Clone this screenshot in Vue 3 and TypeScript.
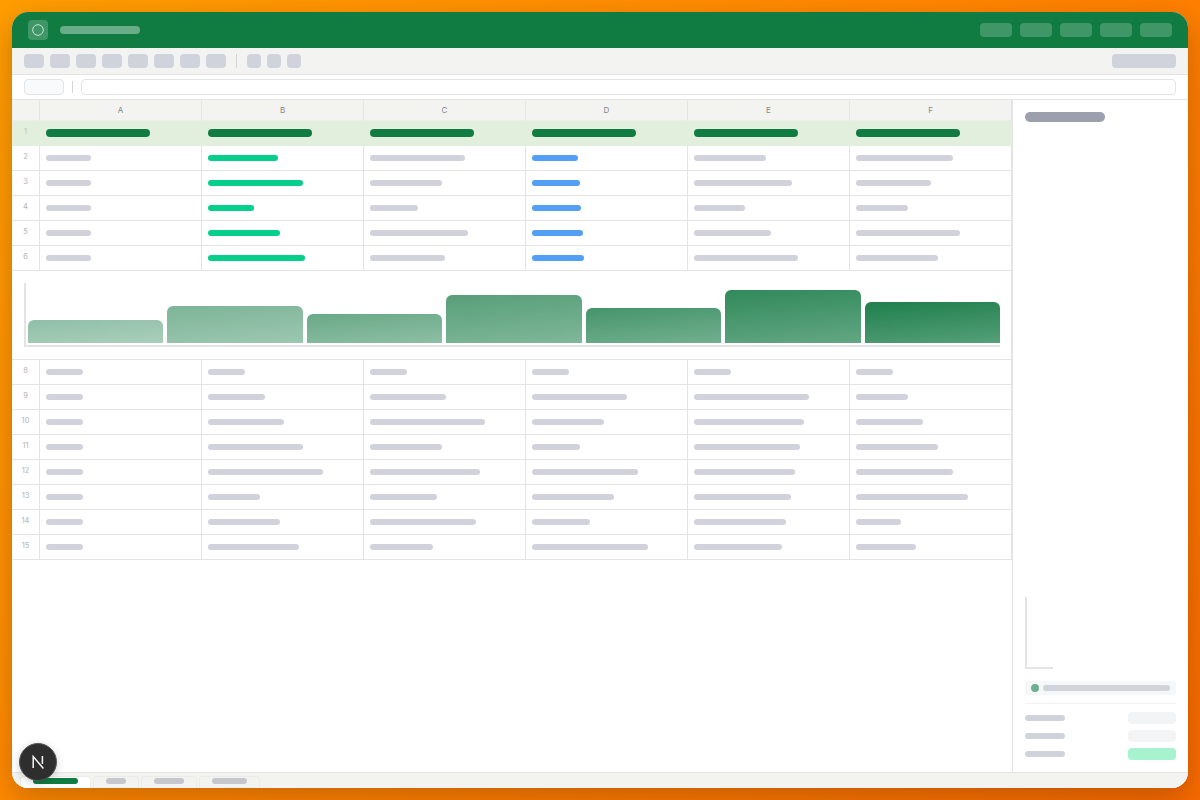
<script setup lang="ts">
// Skeleton spreadsheet: every cell is a placeholder bar, widths come from the rows below.
const columns = ['A', 'B', 'C', 'D', 'E', 'F']

const topRows = [
  { n: 2, w: [45, 70, 95, 46, 72, 97] },
  { n: 3, w: [45, 95, 72, 48, 98, 75] },
  { n: 4, w: [45, 46, 48, 49, 51, 52] },
  { n: 5, w: [45, 72, 98, 51, 77, 104] },
  { n: 6, w: [45, 97, 75, 52, 104, 82] },
]

const bottomRows = [
  { n: 8, w: [37, 37, 37, 37, 37, 37] },
  { n: 9, w: [37, 57, 76, 95, 115, 52] },
  { n: 10, w: [37, 76, 115, 72, 110, 67] },
  { n: 11, w: [37, 95, 72, 48, 106, 82] },
  { n: 12, w: [37, 115, 110, 106, 101, 97] },
  { n: 13, w: [37, 52, 67, 82, 97, 112] },
  { n: 14, w: [37, 72, 106, 58, 92, 45] },
  { n: 15, w: [37, 91, 63, 116, 88, 60] },
]

const chartBars = [
  { h: 23, o: 0.5 },
  { h: 37, o: 0.58 },
  { h: 29, o: 0.67 },
  { h: 48, o: 0.75 },
  { h: 35, o: 0.83 },
  { h: 53, o: 0.92 },
  { h: 41, o: 1 },
]

const tabs = [45, 20, 30, 35]

function barClass(col: number) {
  if (col === 1) return 'bar teal'
  if (col === 3) return 'bar blue'
  return 'bar'
}
</script>

<template>
  <div class="window">
    <header class="titlebar">
      <div class="logo">
        <svg width="12" height="12" viewBox="0 0 12 12">
          <circle cx="6" cy="6" r="5.3" fill="none" stroke="#c6e3d2" stroke-width="1" />
        </svg>
      </div>
      <div class="doc-name"></div>
      <div class="title-actions">
        <span v-for="i in 5" :key="i" class="title-btn"></span>
      </div>
    </header>

    <div class="toolbar">
      <span v-for="i in 8" :key="i" class="tool"></span>
      <span class="tool-sep"></span>
      <span v-for="i in 3" :key="'s' + i" class="tool small"></span>
      <span class="tool wide"></span>
    </div>

    <div class="formula">
      <span class="name-box"></span>
      <span class="formula-sep"></span>
      <span class="formula-input"></span>
    </div>

    <div class="main">
      <div class="sheet">
        <div class="row head">
          <div class="num"></div>
          <div v-for="c in columns" :key="c" class="cell">{{ c }}</div>
        </div>

        <div class="row first">
          <div class="num">1</div>
          <div v-for="c in columns" :key="c" class="cell"><span class="bar strong"></span></div>
        </div>

        <div v-for="r in topRows" :key="r.n" class="row">
          <div class="num">{{ r.n }}</div>
          <div v-for="(w, i) in r.w" :key="i" class="cell">
            <span :class="barClass(i)" :style="{ width: w + 'px' }"></span>
          </div>
        </div>

        <div class="chart-row">
          <div class="chart">
            <div
              v-for="(b, i) in chartBars"
              :key="i"
              class="chart-bar"
              :style="{ height: b.h + 'px', opacity: b.o }"
            ></div>
          </div>
        </div>

        <div v-for="r in bottomRows" :key="r.n" class="row">
          <div class="num">{{ r.n }}</div>
          <div v-for="(w, i) in r.w" :key="i" class="cell">
            <span class="bar" :style="{ width: w + 'px' }"></span>
          </div>
        </div>
      </div>

      <aside class="panel">
        <div class="panel-title"></div>
        <div class="mini-axis"></div>
        <div class="legend">
          <span class="legend-dot"></span>
          <span class="legend-bar"></span>
        </div>
        <div class="panel-rule"></div>
        <div v-for="i in 3" :key="i" class="prop">
          <span class="prop-label"></span>
          <span class="prop-value" :class="{ on: i === 3 }"></span>
        </div>
      </aside>
    </div>

    <footer class="tabs">
      <div v-for="(w, i) in tabs" :key="i" class="tab" :class="{ active: i === 0 }">
        <span class="tab-bar" :style="{ width: w + 'px' }"></span>
      </div>
    </footer>

    <div class="next-badge">
      <svg width="14" height="14" viewBox="0 0 14 14" fill="none">
        <path d="M2.2 13V1.6L12.4 13.4" stroke="#f6f6f6" stroke-width="1.5" />
        <path d="M11.4 1V9" stroke="#f6f6f6" stroke-width="1.5" />
      </svg>
    </div>
  </div>
</template>

<style>
html,
body {
  margin: 0;
  height: 100%;
}
body {
  background: linear-gradient(135deg, #ff9d00 0%, #ff8400 50%, #f96a00 100%);
  overflow: hidden;
}
</style>

<style scoped>
.window {
  position: relative;
  display: flex;
  flex-direction: column;
  width: 1176px;
  height: 776px;
  margin: 12px;
  border-radius: 16px;
  overflow: hidden;
  background: #fff;
  box-shadow: 0 10px 30px rgba(0, 0, 0, 0.22);
  font-family: Inter, "Liberation Sans", sans-serif;
}

.titlebar {
  display: flex;
  align-items: center;
  height: 36px;
  padding: 0 16px;
  box-sizing: border-box;
  background: #107c41;
  flex: none;
}
.logo {
  display: flex;
  align-items: center;
  justify-content: center;
  width: 20px;
  height: 20px;
  border-radius: 4px;
  background: rgba(255, 255, 255, 0.2);
}
.doc-name {
  width: 80px;
  height: 8px;
  margin-left: 12px;
  border-radius: 4px;
  background: rgba(255, 255, 255, 0.38);
}
.title-actions {
  display: flex;
  gap: 8px;
  margin-left: auto;
}
.title-btn {
  width: 32px;
  height: 14px;
  border-radius: 4px;
  background: rgba(255, 255, 255, 0.2);
}

.toolbar {
  display: flex;
  align-items: center;
  gap: 6px;
  height: 27px;
  padding: 0 12px 1px;
  box-sizing: border-box;
  background: #f3f3f1;
  border-bottom: 1px solid #e4e4e4;
  flex: none;
}
.tool {
  width: 20px;
  height: 14px;
  border-radius: 4px;
  background: #d1d3dc;
}
.tool.small {
  width: 14px;
}
.tool.wide {
  width: 64px;
  margin-left: auto;
}
.tool-sep {
  width: 1px;
  height: 14px;
  margin: 0 4px;
  background: #d4d4d4;
}

.formula {
  display: flex;
  align-items: center;
  height: 25px;
  padding: 0 12px;
  box-sizing: border-box;
  border-bottom: 1px solid #e4e4e4;
  flex: none;
}
.name-box {
  width: 40px;
  height: 16px;
  box-sizing: border-box;
  border: 1px solid #e4e4e4;
  border-radius: 4px;
  background: #f8fafc;
}
.formula-sep {
  width: 1px;
  height: 12px;
  margin: 0 8px;
  background: #d4d4d4;
}
.formula-input {
  flex: 1;
  height: 16px;
  box-sizing: border-box;
  border: 1px solid #e4e4e4;
  border-radius: 4px;
}

.main {
  display: flex;
  flex: 1;
  min-height: 0;
}
.sheet {
  width: 1000px;
  flex: none;
}
.row {
  display: grid;
  grid-template-columns: 28px repeat(6, 162px);
  height: 25px;
}
.num,
.cell {
  display: flex;
  align-items: center;
  box-sizing: border-box;
  height: 100%;
  border-right: 1px solid #e4e4e4;
  border-bottom: 1px solid #e4e4e4;
}
.num {
  justify-content: center;
  padding-bottom: 3px;
  font-size: 7.5px;
  color: #b4b4b4;
}
.cell {
  padding-left: 6px;
}
.head {
  height: 21px;
  background: #f3f3f1;
}
.head .num,
.head .cell {
  border-bottom-color: #eaeee6;
}
.head .cell {
  justify-content: center;
  padding: 0 0 1px;
  font-size: 8px;
  font-weight: 400;
  color: #858585;
}
.first {
  background: #e2efdc;
}
.first .num,
.first .cell {
  border-color: #e2efdc;
}
.first .num {
  color: #b5c4b0;
}
.bar {
  display: block;
  height: 6px;
  border-radius: 3px;
  background: #d1d2db;
}
.bar.teal {
  background: #06cf8c;
}
.bar.blue {
  background: #529ff5;
}
.bar.strong {
  width: 104px;
  height: 8px;
  border-radius: 4px;
  background: #107c41;
}

.chart-row {
  box-sizing: border-box;
  height: 89px;
  padding: 12px 11px 12px 12px;
  border-right: 1px solid #e4e4e4;
  border-bottom: 1px solid #e4e4e4;
}
.chart {
  display: flex;
  align-items: flex-end;
  gap: 4px;
  box-sizing: border-box;
  height: 64px;
  padding: 0 0 2px 2px;
  border-left: 2px solid #e4e4e4;
  border-bottom: 2px solid #e4e4e4;
}
.chart-bar {
  flex: 1;
  border-radius: 6px 6px 0 0;
  background: linear-gradient(175deg, #1f7f4c, #559f78);
}

.panel {
  display: flex;
  flex-direction: column;
  flex: 1;
  box-sizing: border-box;
  padding: 12px;
  border-left: 1px solid #e4e4e4;
}
.panel-title {
  width: 80px;
  height: 10px;
  border-radius: 5px;
  background: #9ca0ae;
}
.mini-axis {
  width: 28px;
  height: 72px;
  margin-top: auto;
  margin-bottom: 12px;
  box-sizing: border-box;
  border-left: 2px solid #e4e4e4;
  border-bottom: 2px solid #e4e4e4;
}
.legend {
  display: flex;
  align-items: center;
  gap: 4px;
  height: 14px;
  padding: 0 6px;
  border-radius: 3px;
  background: #f6f7f9;
}
.legend-dot {
  width: 8px;
  height: 8px;
  border-radius: 50%;
  background: #6fae8f;
}
.legend-bar {
  flex: 1;
  height: 6px;
  border-radius: 3px;
  background: #d1d2db;
}
.panel-rule {
  height: 1px;
  margin: 8px 0;
  background: #f1f1f1;
}
.prop {
  display: flex;
  align-items: center;
  justify-content: space-between;
  height: 12px;
}
.prop + .prop {
  margin-top: 6px;
}
.prop-label {
  width: 40px;
  height: 6px;
  border-radius: 3px;
  background: #d1d3dc;
}
.prop-value {
  width: 48px;
  height: 12px;
  border-radius: 4px;
  background: #f3f4f5;
}
.prop-value.on {
  background: #a7f3d0;
}

.tabs {
  display: flex;
  align-items: flex-end;
  gap: 2px;
  height: 16px;
  padding-left: 8px;
  box-sizing: border-box;
  background: #f3f3f1;
  border-top: 1px solid #e4e4e4;
  flex: none;
}
.tab {
  height: 12px;
  box-sizing: border-box;
  padding: 1px 12px 0;
  border: 1px solid #ebebe9;
  border-bottom: 0;
  border-radius: 4px 4px 0 0;
}
.tab.active {
  background: #fff;
}
.tab-bar {
  display: block;
  height: 6px;
  border-radius: 3px;
  background: #c6c7cc;
}
.tab.active .tab-bar {
  background: #107c41;
}

.next-badge {
  position: absolute;
  left: 7px;
  bottom: 7px;
  display: flex;
  align-items: center;
  justify-content: center;
  box-sizing: border-box;
  width: 38px;
  height: 38px;
  border-radius: 50%;
  background: #2e2e2e;
  border: 1px solid #565656;
  box-shadow: 0 2px 8px rgba(0, 0, 0, 0.18);
}
</style>
